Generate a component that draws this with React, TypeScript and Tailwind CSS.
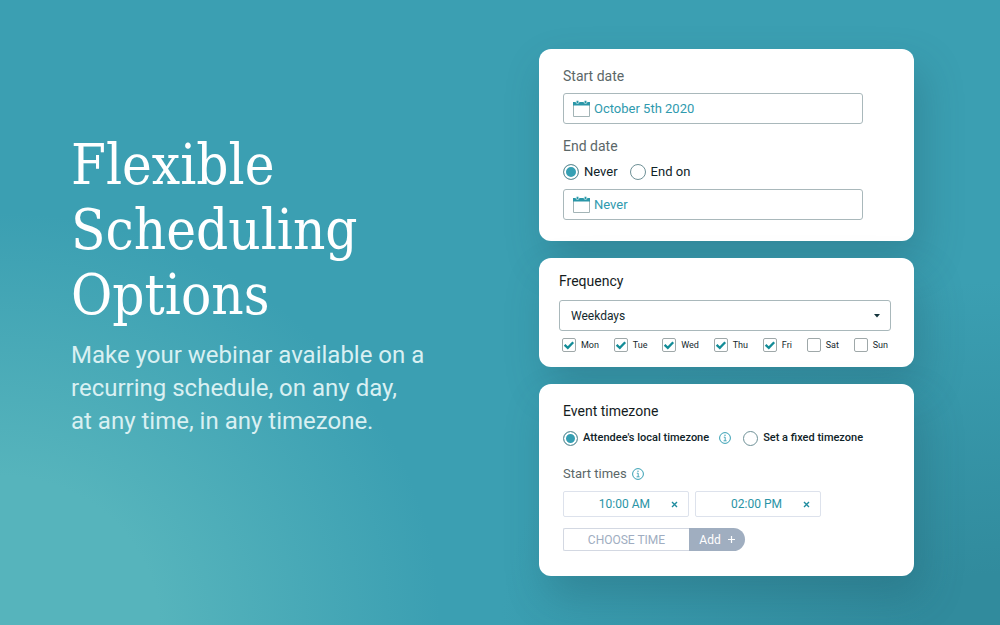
import { useState, type ReactNode } from "react";

const DAYS = ["Mon", "Tue", "Wed", "Thu", "Fri", "Sat", "Sun"];

function Card({ className, children }: { className: string; children: ReactNode }) {
  return (
    <section
      className={`rounded-xl bg-white shadow-[8px_20px_40px_rgba(30,80,95,0.28)] ${className}`}
    >
      {children}
    </section>
  );
}

function CalendarIcon() {
  return (
    <svg className="h-[17px] w-[17px] shrink-0" viewBox="0 0 17 17" fill="none" aria-hidden="true">
      <path d="M0.5 5V16.5H16.5V5" stroke="#a3b4b6" />
      <path d="M0 2H17V5.5H0z" fill="#2a97a8" />
      <circle cx="4.5" cy="2" r="1.5" fill="#2a97a8" stroke="#d5ecef" strokeWidth="0.8" />
      <circle cx="12.5" cy="2" r="1.5" fill="#2a97a8" stroke="#d5ecef" strokeWidth="0.8" />
    </svg>
  );
}

function InfoIcon() {
  return (
    <svg className="h-3 w-3" viewBox="0 0 12 12" fill="none" stroke="#369fb3" aria-hidden="true">
      <circle cx="6" cy="6" r="5.4" />
      <path d="M4.8 5.2H6.2V8.7M4.6 8.8H7.6" strokeWidth="0.9" />
      <circle cx="6" cy="3.2" r="0.7" fill="#369fb3" stroke="none" />
    </svg>
  );
}

function DateField({ id, value }: { id: string; value: string }) {
  return (
    <div className="flex h-[31px] items-center gap-1 rounded-[3px] border border-[#a9b8bb] pl-[9px] pr-2">
      <CalendarIcon />
      <input
        id={id}
        defaultValue={value}
        className="w-full min-w-0 bg-transparent text-[13px] text-[#2f9aae] outline-none"
      />
    </div>
  );
}

function Radio({
  name,
  label,
  defaultChecked,
  size,
}: {
  name: string;
  label: string;
  defaultChecked?: boolean;
  size: "sm" | "md";
}) {
  return (
    <label
      className={`flex items-center gap-[5px] text-[#0f2328] ${
        size === "md" ? "text-[13px]" : "text-[11px] font-medium"
      }`}
    >
      <input
        type="radio"
        name={name}
        defaultChecked={defaultChecked}
        className={`shrink-0 appearance-none rounded-full border border-[#6f9197] bg-white checked:bg-[#369fb3] checked:shadow-[inset_0_0_0_2px_white] ${
          size === "md" ? "h-4 w-4" : "h-[15px] w-[15px]"
        }`}
      />
      {label}
    </label>
  );
}

function DayCheckbox({ day, checked, onToggle }: { day: string; checked: boolean; onToggle: () => void }) {
  return (
    <label className="flex items-center gap-[5px] text-[9px] leading-4 text-[#14292d]">
      <span className="relative h-[14px] w-[14px]">
        <input
          type="checkbox"
          checked={checked}
          onChange={onToggle}
          className="block h-[14px] w-[14px] appearance-none rounded-[2px] border border-[#9fa8a9] bg-white"
        />
        {checked && (
          <svg
            className="pointer-events-none absolute inset-0 h-[14px] w-[14px]"
            viewBox="0 0 14 14"
            fill="none"
            aria-hidden="true"
          >
            <path d="M2.6 6.8L5.8 9.8L11.2 4.2" stroke="#138c97" strokeWidth="2.3" />
          </svg>
        )}
      </span>
      {day}
    </label>
  );
}

function TimeChip({ time, onRemove }: { time: string; onRemove: () => void }) {
  return (
    <li className="flex h-[26px] w-[126px] items-center justify-end rounded-[2px] border border-[#dde2ec] pr-[9px] text-xs text-[#2a94a6]">
      {time}
      <button type="button" aria-label={`Remove ${time}`} onClick={onRemove} className="ml-5 p-px">
        <svg className="h-[7px] w-[7px]" viewBox="0 0 7 7" stroke="#1f8c9f" strokeWidth="1.4" aria-hidden="true">
          <path d="M1 1L6 6M6 1L1 6" />
        </svg>
      </button>
    </li>
  );
}

export default function App() {
  const [days, setDays] = useState(["Mon", "Tue", "Wed", "Thu", "Fri"]);
  const [times, setTimes] = useState(["10:00 AM", "02:00 PM"]);

  const toggleDay = (day: string) =>
    setDays(days.includes(day) ? days.filter((d) => d !== day) : [...days, day]);

  return (
    <main className="flex min-h-screen items-center justify-between gap-8 bg-[#3b9fb2] bg-[radial-gradient(ellipse_44%_66%_at_0%_100%,#56b4bc_0%,#56b4bc_36%,#3b9fb200_100%),radial-gradient(ellipse_50%_55%_at_100%_100%,#318b9d_0%,#318b9d_15%,#3b9fb200_100%)] pl-[71px] pr-[86px] font-['Roboto',sans-serif]">
      {/* Headline */}
      <div className="flex-1 pb-14">
        <h1 className="max-w-[320px] font-['DejaVu_Serif_Condensed','DejaVu_Serif',serif] text-[56px] leading-[65px] text-white">
          Flexible Scheduling Options
        </h1>
        <p className="mt-3 text-2xl leading-[33px] text-[#d9f0f2]">
          Make your webinar available on a
          <br />
          recurring schedule, on any day,
          <br />
          at any time, in any timezone.
        </p>
      </div>

      <form className="flex w-[375px] flex-col gap-[17px]" onSubmit={(e) => e.preventDefault()}>
        {/* Dates */}
        <Card className="pb-[21px] pl-6 pr-[51px] pt-[17px]">
          <label htmlFor="start-date" className="mb-[7px] block text-sm text-[#5b6768]">
            Start date
          </label>
          <DateField id="start-date" value="October 5th 2020" />
          <label htmlFor="end-date" className="mb-[6px] mt-3 block text-sm text-[#5b6768]">
            End date
          </label>
          <div className="mb-[7px] flex h-5 items-center gap-3">
            <Radio name="end" label="Never" size="md" defaultChecked />
            <Radio name="end" label="End on" size="md" />
          </div>
          <DateField id="end-date" value="Never" />
        </Card>

        {/* Frequency */}
        <Card className="pb-[13px] pl-5 pr-[23px] pt-[13px]">
          <label htmlFor="frequency" className="mb-[9px] block text-sm text-[#141c1e]">
            Frequency
          </label>
          <div className="relative">
            <select
              id="frequency"
              defaultValue="Weekdays"
              className="block h-[31px] w-full appearance-none rounded-[3px] border border-[#a9b8bb] bg-white px-[11px] text-xs text-[#14292d]"
            >
              <option>Weekdays</option>
              <option>Every day</option>
            </select>
            <svg
              className="pointer-events-none absolute right-[11px] top-[14px] h-1 w-[6px]"
              viewBox="0 0 6 4"
              fill="#14343b"
              aria-hidden="true"
            >
              <path d="M0 0H6L3 3.6z" />
            </svg>
          </div>
          <div className="mt-[5px] flex h-[18px] items-center justify-between px-[3px]">
            {DAYS.map((day) => (
              <DayCheckbox key={day} day={day} checked={days.includes(day)} onToggle={() => toggleDay(day)} />
            ))}
          </div>
        </Card>

        {/* Timezone and times */}
        <Card className="px-6 pb-[25px] pt-[17px]">
          <h2 className="mb-[7px] text-sm text-[#141c1e]">Event timezone</h2>
          <div className="mb-4 flex h-5 items-center">
            <Radio name="timezone" label="Attendee's local timezone" size="sm" defaultChecked />
            <button type="button" aria-label="About local timezone" className="ml-[10px] mr-3">
              <InfoIcon />
            </button>
            <Radio name="timezone" label="Set a fixed timezone" size="sm" />
          </div>
          <div className="mb-[7px] flex h-5 items-center gap-[5px]">
            <h3 className="text-[13px] text-[#5b6768]">Start times</h3>
            <button type="button" aria-label="About start times">
              <InfoIcon />
            </button>
          </div>
          <ul className="flex gap-[6px]">
            {times.map((time) => (
              <TimeChip key={time} time={time} onRemove={() => setTimes(times.filter((t) => t !== time))} />
            ))}
          </ul>
          <div className="mt-[11px] flex h-[23px]">
            <input
              aria-label="Choose time"
              placeholder="CHOOSE TIME"
              className="w-[126px] rounded-l-[2px] border border-r-0 border-[#d3d8e2] text-center text-xs outline-none placeholder:text-[#a0adc1]"
            />
            <button
              type="button"
              className="flex w-14 items-center justify-center gap-[7px] rounded-r-full bg-[#a0aec0] text-xs text-white"
            >
              Add
              <svg className="h-[7px] w-[7px]" viewBox="0 0 7 7" stroke="#fff" strokeWidth="1.2" aria-hidden="true">
                <path d="M3.5 0V7M0 3.5H7" />
              </svg>
            </button>
          </div>
        </Card>
      </form>
    </main>
  );
}
